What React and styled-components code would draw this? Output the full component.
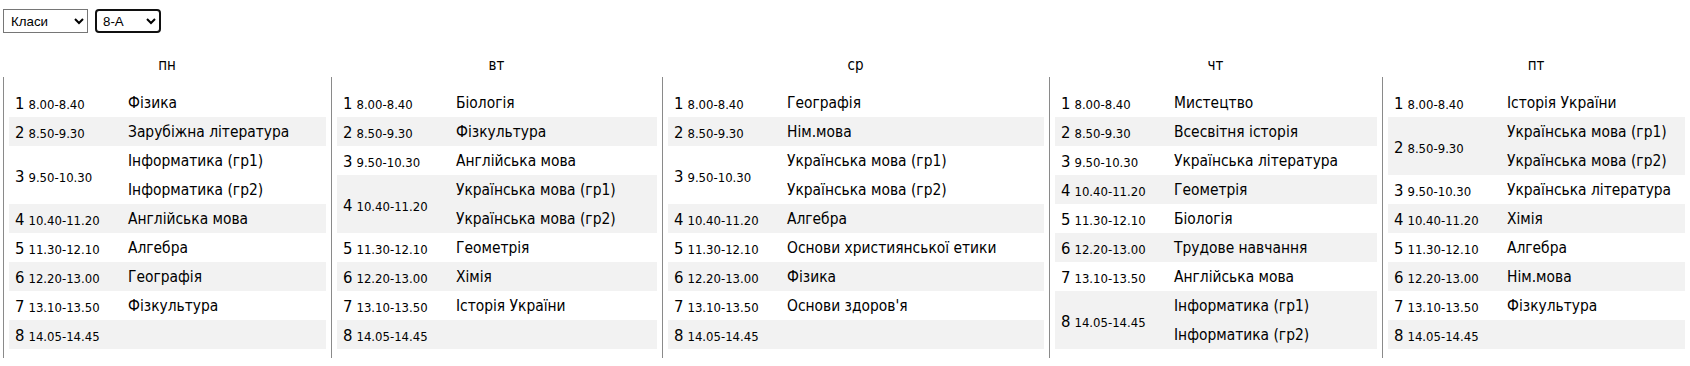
import React from 'react'
import styled, { createGlobalStyle } from 'styled-components'

const GlobalStyle = createGlobalStyle`
  body {
    margin: 0;
    background: #fff;
    color: #000;
    font-family: "DejaVu Sans Condensed", "DejaVu Sans", sans-serif;
  }
`

const Toolbar = styled.div`
  display: flex;
  gap: 7px;
  padding: 9px 3px 0;
`
const Picker = styled.select`
  height: 24px;
  width: ${(p) => p.$width}px;
  font-family: "Liberation Sans", Arial, sans-serif;
  font-size: 13.33px;
  color: #000;
  background: #fff;
  border: ${(p) => (p.$active ? '2px solid #101010' : '1px solid #767676')};
  border-radius: ${(p) => (p.$active ? '4px' : '0')};
  padding: 0 ${(p) => (p.$active ? '2px' : '3px')};
`

const Week = styled.div`
  display: grid;
  grid-template-columns: 328px 331px 387px 333px 1fr;
  margin-top: 20px;
  padding-left: 3px;
`
const DayHead = styled.div`
  text-align: center;
  font-size: 15px;
  line-height: 24px;
`
const DayBody = styled.div`
  border-left: 1px solid #8a8a8a;
  padding: 11px 5px 9px 5px;
`
const Lesson = styled.div`
  display: flex;
  align-items: center;
  background: ${(p) => (p.$odd ? 'transparent' : '#f2f2f2')};
`
const Slot = styled.div`
  width: 113px;
  padding: 2px 0 0 6px;
  flex-shrink: 0;
  white-space: nowrap;
`
const Num = styled.span`
  font-size: 16.5px;
`
const Time = styled.span`
  font-size: 13px;
  margin-left: 4px;
`
const Subjects = styled.div`
  display: flex;
  flex-direction: column;
  min-height: 29px;
`
const Subject = styled.div`
  font-size: 15.4px;
  line-height: 27px;
  padding-top: 2px;
  white-space: nowrap;
`

const times = [
  '8.00-8.40', '8.50-9.30', '9.50-10.30', '10.40-11.20',
  '11.30-12.10', '12.20-13.00', '13.10-13.50', '14.05-14.45',
]

const ukr = ['Українська мова (гр1)', 'Українська мова (гр2)']
const inf = ['Інформатика (гр1)', 'Інформатика (гр2)']

const days = [
  { name: 'пн', lessons: [['Фізика'], ['Зарубіжна література'], inf, ['Англійська мова'], ['Алгебра'], ['Географія'], ['Фізкультура'], []] },
  { name: 'вт', lessons: [['Біологія'], ['Фізкультура'], ['Англійська мова'], ukr, ['Геометрія'], ['Хімія'], ['Історія України'], []] },
  { name: 'ср', lessons: [['Географія'], ['Нім.мова'], ukr, ['Алгебра'], ['Основи християнської етики'], ['Фізика'], ["Основи здоров'я"], []] },
  { name: 'чт', lessons: [['Мистецтво'], ['Всесвітня історія'], ['Українська література'], ['Геометрія'], ['Біологія'], ['Трудове навчання'], ['Англійська мова'], inf] },
  { name: 'пт', lessons: [['Історія України'], ukr, ['Українська література'], ['Хімія'], ['Алгебра'], ['Нім.мова'], ['Фізкультура'], []] },
]

const App = () => (
  <>
    <GlobalStyle />
    <Toolbar>
      <Picker $width={85} defaultValue="classes">
        <option value="classes">Класи</option>
      </Picker>
      <Picker $width={66} $active defaultValue="8a">
        <option value="8a">8-А</option>
      </Picker>
    </Toolbar>
    <Week>
      {days.map((d) => (
        <DayHead key={d.name}>{d.name}</DayHead>
      ))}
      {days.map((d) => (
        <DayBody key={d.name}>
          {d.lessons.map((subs, i) => (
            <Lesson key={i} $odd={i % 2 === 0}>
              <Slot>
                <Num>{i + 1}</Num>
                <Time>{times[i]}</Time>
              </Slot>
              <Subjects>
                {subs.map((s) => (
                  <Subject key={s}>{s}</Subject>
                ))}
              </Subjects>
            </Lesson>
          ))}
        </DayBody>
      ))}
    </Week>
  </>
)

export default App
